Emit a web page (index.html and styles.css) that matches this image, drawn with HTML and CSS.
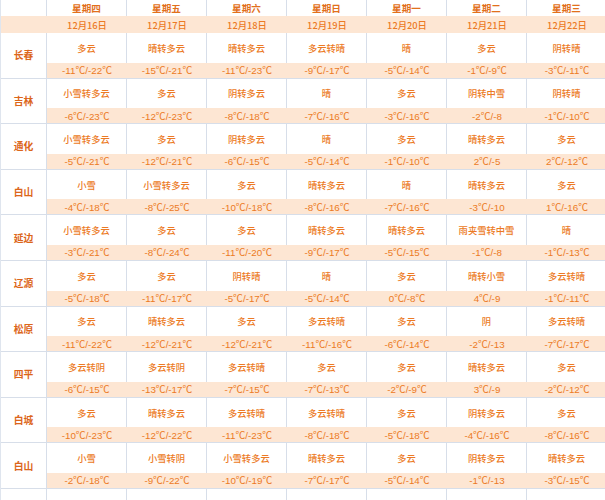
FILE: index.html
```html
<!DOCTYPE html>
<html lang="zh-CN">
<head>
<meta charset="utf-8">
<title>吉林天气预报</title>
<link rel="stylesheet" href="styles.css">
</head>
<body>
<div class="table">
  <div class="corner"></div>
  <div class="wk">星期四</div><div class="wk">星期五</div><div class="wk">星期六</div><div class="wk">星期日</div><div class="wk">星期一</div><div class="wk">星期二</div><div class="wk">星期三</div>

  <div class="dates">
    <div class="dcorner"></div>
    <div>12月16日</div><div>12月17日</div><div>12月18日</div><div>12月19日</div><div>12月20日</div><div>12月21日</div><div>12月22日</div>
  </div>

  <div class="city">长春</div>
  <div class="wx">多云</div><div class="wx">晴转多云</div><div class="wx">晴转多云</div><div class="wx">多云转晴</div><div class="wx">晴</div><div class="wx">多云</div><div class="wx">阴转晴</div>
  <div class="temps"><div>-11℃/-22℃</div><div>-15℃/-21℃</div><div>-11℃/-23℃</div><div>-9℃/-17℃</div><div>-5℃/-14℃</div><div>-1℃/-9℃</div><div>-3℃/-11℃</div></div>

  <div class="city">吉林</div>
  <div class="wx">小雪转多云</div><div class="wx">多云</div><div class="wx">阴转多云</div><div class="wx">晴</div><div class="wx">多云</div><div class="wx">阴转中雪</div><div class="wx">阴转晴</div>
  <div class="temps"><div>-6℃/-23℃</div><div>-12℃/-23℃</div><div>-8℃/-18℃</div><div>-7℃/-16℃</div><div>-3℃/-16℃</div><div>-2℃/-8</div><div>-1℃/-10℃</div></div>

  <div class="city">通化</div>
  <div class="wx">小雪转多云</div><div class="wx">多云</div><div class="wx">阴转多云</div><div class="wx">晴</div><div class="wx">多云</div><div class="wx">晴转多云</div><div class="wx">多云</div>
  <div class="temps"><div>-5℃/-21℃</div><div>-12℃/-21℃</div><div>-6℃/-15℃</div><div>-5℃/-14℃</div><div>-1℃/-10℃</div><div>2℃/-5</div><div>2℃/-12℃</div></div>

  <div class="city">白山</div>
  <div class="wx">小雪</div><div class="wx">小雪转多云</div><div class="wx">多云</div><div class="wx">晴转多云</div><div class="wx">晴</div><div class="wx">晴转多云</div><div class="wx">多云</div>
  <div class="temps"><div>-4℃/-18℃</div><div>-8℃/-25℃</div><div>-10℃/-18℃</div><div>-8℃/-16℃</div><div>-7℃/-16℃</div><div>-3℃/-10</div><div>1℃/-16℃</div></div>

  <div class="city">延边</div>
  <div class="wx">小雪转多云</div><div class="wx">多云</div><div class="wx">多云</div><div class="wx">晴转多云</div><div class="wx">晴转多云</div><div class="wx">雨夹雪转中雪</div><div class="wx">晴</div>
  <div class="temps"><div>-3℃/-21℃</div><div>-8℃/-24℃</div><div>-11℃/-20℃</div><div>-9℃/-17℃</div><div>-5℃/-15℃</div><div>-1℃/-8</div><div>-1℃/-13℃</div></div>

  <div class="city">辽源</div>
  <div class="wx">多云</div><div class="wx">多云</div><div class="wx">阴转晴</div><div class="wx">晴</div><div class="wx">多云</div><div class="wx">晴转小雪</div><div class="wx">多云转晴</div>
  <div class="temps"><div>-5℃/-18℃</div><div>-11℃/-17℃</div><div>-5℃/-17℃</div><div>-5℃/-14℃</div><div>0℃/-8℃</div><div>4℃/-9</div><div>-1℃/-11℃</div></div>

  <div class="city">松原</div>
  <div class="wx">多云</div><div class="wx">晴转多云</div><div class="wx">多云</div><div class="wx">多云转晴</div><div class="wx">多云</div><div class="wx">阴</div><div class="wx">多云转晴</div>
  <div class="temps"><div>-11℃/-22℃</div><div>-12℃/-21℃</div><div>-12℃/-21℃</div><div>-11℃/-16℃</div><div>-6℃/-14℃</div><div>-2℃/-13</div><div>-7℃/-17℃</div></div>

  <div class="city">四平</div>
  <div class="wx">多云转阴</div><div class="wx">多云转阴</div><div class="wx">多云转晴</div><div class="wx">多云</div><div class="wx">多云</div><div class="wx">晴转多云</div><div class="wx">多云</div>
  <div class="temps"><div>-6℃/-15℃</div><div>-13℃/-17℃</div><div>-7℃/-15℃</div><div>-7℃/-13℃</div><div>-2℃/-9℃</div><div>3℃/-9</div><div>-2℃/-12℃</div></div>

  <div class="city">白城</div>
  <div class="wx">多云</div><div class="wx">晴转多云</div><div class="wx">多云转晴</div><div class="wx">多云转晴</div><div class="wx">多云</div><div class="wx">阴转多云</div><div class="wx">多云</div>
  <div class="temps"><div>-10℃/-23℃</div><div>-12℃/-22℃</div><div>-11℃/-23℃</div><div>-8℃/-18℃</div><div>-5℃/-18℃</div><div>-4℃/-16℃</div><div>-8℃/-16℃</div></div>

  <div class="city">白山</div>
  <div class="wx">小雪</div><div class="wx">小雪转阴</div><div class="wx">小雪转多云</div><div class="wx">晴转多云</div><div class="wx">多云</div><div class="wx">阴转多云</div><div class="wx">晴转多云</div>
  <div class="temps"><div>-2℃/-18℃</div><div>-9℃/-22℃</div><div>-10℃/-19℃</div><div>-7℃/-17℃</div><div>-5℃/-14℃</div><div>-1℃/-13</div><div>-3℃/-15℃</div></div>

  <div class="city"></div>
  <div class="wx"></div><div class="wx"></div><div class="wx"></div><div class="wx"></div><div class="wx"></div><div class="wx"></div><div class="wx"></div>
</div>
</body>
</html>
```

FILE: styles.css
```css
html, body {
  margin: 0;
  padding: 0;
  background: #ffffff;
  overflow: hidden;
}

.table {
  display: grid;
  grid-template-columns: 46px repeat(7, 80px);
  grid-auto-rows: auto;
  width: 606px;
  border-left: 1px solid #dfe5ee;
  font-family: "Noto Sans CJK SC", "Liberation Sans", sans-serif;
  font-size: 9.3px;
  font-weight: 500;
  color: #ec7a24;
}

.corner,
.wk {
  height: 16px;
  border-right: 1px solid #d7dee9;
}

.wk {
  display: flex;
  align-items: center;
  justify-content: center;
  font-weight: bold;
  color: #e2701c;
  font-size: 9.6px;
}

.dates {
  grid-column: 1 / -1;
  display: grid;
  grid-template-columns: 46px repeat(7, 80px);
  height: 17px;
  background: #fde6d3;
}

.dates > div {
  display: flex;
  align-items: center;
  justify-content: center;
}

.city {
  grid-row: span 2;
  grid-column: 1;
  display: flex;
  align-items: center;
  justify-content: center;
  font-weight: bold;
  font-size: 9.8px;
  color: #dc661a;
  border-right: 1px solid #d7dee9;
  border-bottom: 1px solid #d7dee9;
}

.wx {
  height: 29.6px;
  display: flex;
  align-items: center;
  justify-content: center;
  border-right: 1px solid #d7dee9;
  box-sizing: border-box;
}

.temps {
  grid-column: 2 / -1;
  display: grid;
  grid-template-columns: repeat(7, 80px);
  height: 15px;
  background: #fde6d3;
  border-bottom: 1px solid #d7dee9;
  font-family: "Liberation Sans", "Noto Sans CJK SC", sans-serif;
  font-size: 9.8px;
  font-weight: normal;
}

.temps > div {
  display: flex;
  align-items: center;
  justify-content: center;
}
```
